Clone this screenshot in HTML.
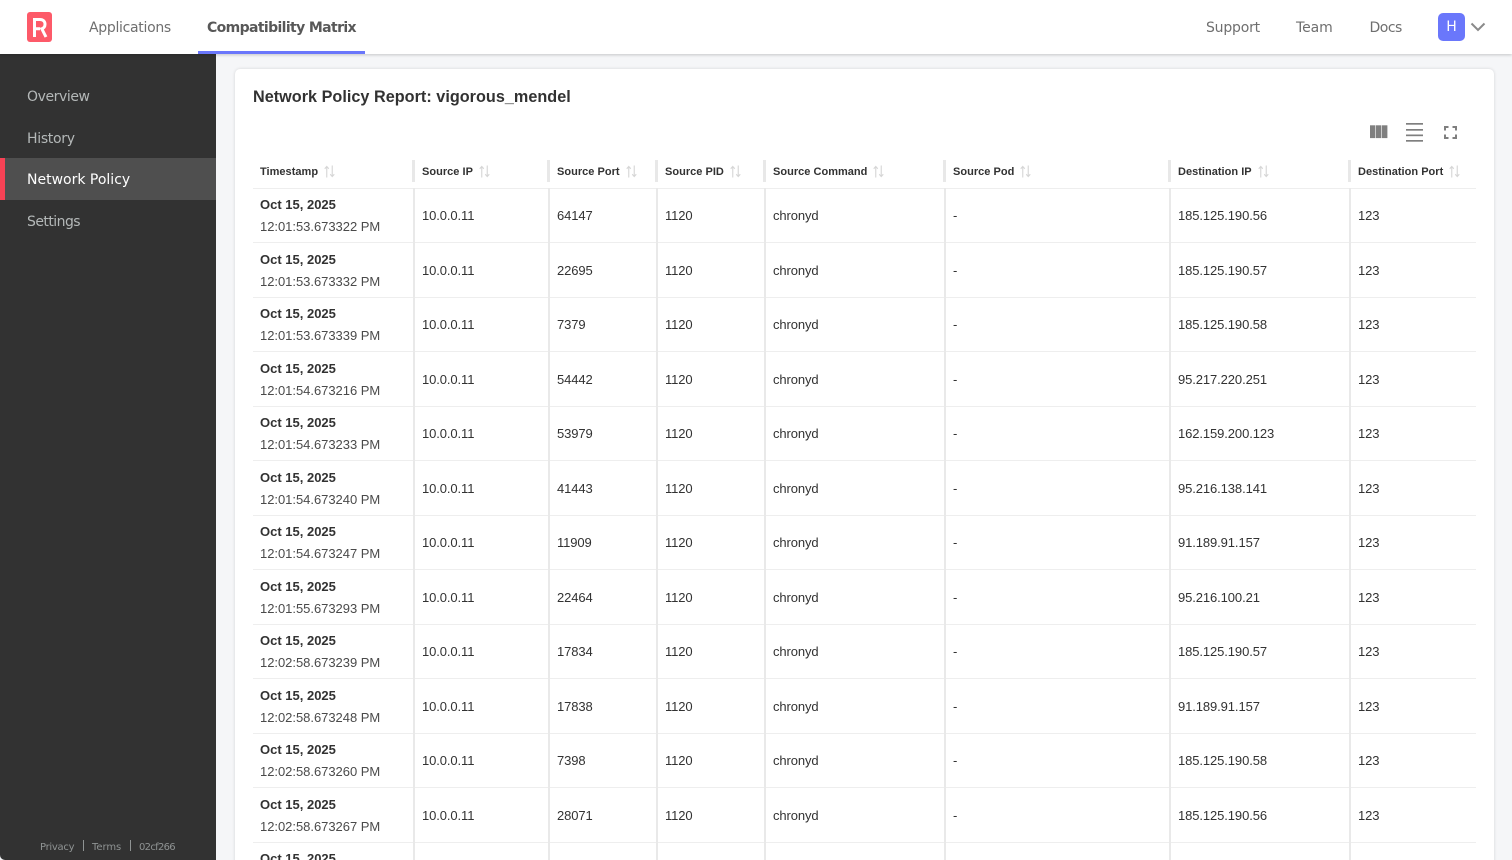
<!DOCTYPE html>
<html><head><meta charset="utf-8"><title>Network Policy</title>
<style>
*{box-sizing:border-box}
html,body{margin:0;padding:0;width:1512px;height:860px;overflow:hidden;background:#f5f6f8;font-family:"Liberation Sans",sans-serif;color:#323232}
#wrap{position:relative;width:1512px;height:860px;overflow:hidden;background:#f5f6f8}
.a{position:absolute;white-space:nowrap}
#top{position:absolute;left:0;top:0;width:1512px;height:54px;background:#fff;box-shadow:0 1px 3px rgba(0,0,0,.2);z-index:5}
.nav{position:absolute;top:18px;font-family:"DejaVu Sans",sans-serif;font-size:14px;line-height:20px;color:#6f6f6f;white-space:nowrap}
#side{position:absolute;left:0;top:54px;width:216px;height:806px;background:#323232;border-bottom-left-radius:5px}
.si{position:absolute;left:27px;font-family:"DejaVu Sans",sans-serif;font-size:14px;line-height:20px;color:#b4b8b8;white-space:nowrap}
.ft{position:absolute;top:787px;font-family:"DejaVu Sans",sans-serif;font-size:10px;line-height:14px;color:#8f9393;white-space:nowrap}
#card{position:absolute;left:235px;top:69px;width:1259px;height:830px;background:#fff;border-radius:5px;box-shadow:0 0 3px rgba(0,0,0,.14)}
table{position:absolute;left:253px;top:154.7px;border-collapse:collapse;table-layout:fixed;width:1223px;font-size:13px}
th{height:33.5px;padding:1px 0 0 7px;text-align:left;font-size:11px;letter-spacing:.02px;font-weight:700;position:relative;border-bottom:1px solid #eee;color:#323232;white-space:nowrap}
th+th{padding-left:9px}
th+th:before{content:"";position:absolute;left:-1.5px;top:5px;width:3px;height:22px;background:#e8e8e8}
th svg{margin-left:6px;vertical-align:-3px}
td{height:54.5px;padding:2px 0 0 9px;border-bottom:1px solid #eee;color:#323232;white-space:nowrap;line-height:16px;letter-spacing:-.1px;position:relative}
td+td:before{content:"";position:absolute;left:0;top:-1px;bottom:-1px;width:2px;background:#e9e9e9}
td:first-child{padding-left:7px;line-height:22px;color:#4a4a4a;letter-spacing:-.03px}
td b{display:block;font-weight:700;font-size:13px;color:#323232;letter-spacing:0}
</style></head><body>
<div id="wrap">
<div id="top">
<svg class="a" style="left:27px;top:12px" width="26" height="30" viewBox="0 0 26 30"><rect width="25" height="30" rx="3" fill="#fd5a69"/><path d="M7.500 25V7.500h5.500c3 0 5 1.800 5 4.800 0 2.400-1.200 3.900-3.200 4.500L19 25M7.500 16.800h5.500" fill="none" stroke="#fff" stroke-width="3"/></svg>
<div class="nav" style="left:89px;letter-spacing:-.3px">Applications</div>
<div class="nav" style="left:207px;font-weight:700;letter-spacing:-.62px;color:#585858">Compatibility Matrix</div>
<div class="a" style="left:198px;top:51px;width:167px;height:3px;background:#6a77fb"></div>
<div class="nav" style="left:1206px;letter-spacing:-.2px">Support</div>
<div class="nav" style="left:1296px;letter-spacing:-.1px">Team</div>
<div class="nav" style="left:1369.500px;letter-spacing:-.5px">Docs</div>
<div class="a" style="left:1438px;top:13px;width:27px;height:28px;border-radius:5px;background:#6a77fb;color:#fff;text-align:center;font:14px/28px 'DejaVu Sans',sans-serif">H</div>
<svg class="a" style="left:1470px;top:22px" width="16" height="10" viewBox="0 0 16 10"><path d="M1.500 1.500 8 8l6.500-6.500" fill="none" stroke="#8a8a8a" stroke-width="2"/></svg>
</div>
<div id="side">
<div class="si" style="top:33px;letter-spacing:-.42px">Overview</div>
<div class="si" style="top:75px;letter-spacing:-.3px">History</div>
<div class="a" style="left:0;top:104px;width:216px;height:42px;background:#4f4f4f"></div>
<div class="a" style="left:0;top:104px;width:5px;height:42px;background:#f74255"></div>
<div class="si" style="top:116px;color:#fff;letter-spacing:0">Network Policy</div>
<div class="si" style="top:158px;letter-spacing:-.55px">Settings</div>
<div class="ft" style="left:40px;letter-spacing:-.28px">Privacy</div>
<div class="a" style="left:83px;top:786px;width:1px;height:11px;background:#8f9393"></div>
<div class="ft" style="left:92px;letter-spacing:-.05px">Terms</div>
<div class="a" style="left:130px;top:786px;width:1px;height:11px;background:#8f9393"></div>
<div class="ft" style="left:139px;letter-spacing:-.7px">02cf266</div>
</div>
<div id="card"></div>
<div class="a" style="left:253px;top:87px;font-size:16.200px;line-height:21px;font-weight:700;color:#323232;letter-spacing:.03px">Network Policy Report: vigorous_mendel</div>
<svg class="a" style="left:1370px;top:122px" width="96" height="20" viewBox="0 0 96 20"><g fill="#7f7f7f"><rect x="0" y="3.300" width="5.400" height="12.800"/><rect x="6" y="3.300" width="5.400" height="12.800"/><rect x="12" y="3.300" width="5.400" height="12.800"/><rect x="36" y="1" width="17" height="1.700"/><rect x="36" y="7" width="17" height="1.700"/><rect x="36" y="12.500" width="17" height="1.700"/><rect x="36" y="18" width="17" height="1.700"/></g><path d="M75 8.500V5h3.500M82.500 5H86v3.500M86 12.500V16h-3.500M78.500 16H75v-3.500" fill="none" stroke="#7f7f7f" stroke-width="2"/></svg>
<table><colgroup><col style="width:160px"><col style="width:135px"><col style="width:108px"><col style="width:108px"><col style="width:180px"><col style="width:225px"><col style="width:180px"><col style="width:127px"></colgroup>
<tr><th>Timestamp<svg width="11" height="13" viewBox="0 0 12 13"><path d="M3 13V1M.8 3.500 3 1l2.200 2.500M9 0v12M6.800 9.500 9 12l2.200-2.500" fill="none" stroke="#d6d6d6" stroke-width="1.200"/></svg></th><th>Source IP<svg width="11" height="13" viewBox="0 0 12 13"><path d="M3 13V1M.8 3.500 3 1l2.200 2.500M9 0v12M6.800 9.500 9 12l2.200-2.500" fill="none" stroke="#d6d6d6" stroke-width="1.200"/></svg></th><th>Source Port<svg width="11" height="13" viewBox="0 0 12 13"><path d="M3 13V1M.8 3.500 3 1l2.200 2.500M9 0v12M6.800 9.500 9 12l2.200-2.500" fill="none" stroke="#d6d6d6" stroke-width="1.200"/></svg></th><th>Source PID<svg width="11" height="13" viewBox="0 0 12 13"><path d="M3 13V1M.8 3.500 3 1l2.200 2.500M9 0v12M6.800 9.500 9 12l2.200-2.500" fill="none" stroke="#d6d6d6" stroke-width="1.200"/></svg></th><th>Source Command<svg width="11" height="13" viewBox="0 0 12 13"><path d="M3 13V1M.8 3.500 3 1l2.200 2.500M9 0v12M6.800 9.500 9 12l2.200-2.500" fill="none" stroke="#d6d6d6" stroke-width="1.200"/></svg></th><th>Source Pod<svg width="11" height="13" viewBox="0 0 12 13"><path d="M3 13V1M.8 3.500 3 1l2.200 2.500M9 0v12M6.800 9.500 9 12l2.200-2.500" fill="none" stroke="#d6d6d6" stroke-width="1.200"/></svg></th><th>Destination IP<svg width="11" height="13" viewBox="0 0 12 13"><path d="M3 13V1M.8 3.500 3 1l2.200 2.500M9 0v12M6.800 9.500 9 12l2.200-2.500" fill="none" stroke="#d6d6d6" stroke-width="1.200"/></svg></th><th>Destination Port<svg width="11" height="13" viewBox="0 0 12 13"><path d="M3 13V1M.8 3.500 3 1l2.200 2.500M9 0v12M6.800 9.500 9 12l2.200-2.500" fill="none" stroke="#d6d6d6" stroke-width="1.200"/></svg></th></tr>
<tr><td><b>Oct 15, 2025</b>12:01:53.673322 PM</td><td>10.0.0.11</td><td>64147</td><td>1120</td><td>chronyd</td><td>-</td><td>185.125.190.56</td><td>123</td></tr>
<tr><td><b>Oct 15, 2025</b>12:01:53.673332 PM</td><td>10.0.0.11</td><td>22695</td><td>1120</td><td>chronyd</td><td>-</td><td>185.125.190.57</td><td>123</td></tr>
<tr><td><b>Oct 15, 2025</b>12:01:53.673339 PM</td><td>10.0.0.11</td><td>7379</td><td>1120</td><td>chronyd</td><td>-</td><td>185.125.190.58</td><td>123</td></tr>
<tr><td><b>Oct 15, 2025</b>12:01:54.673216 PM</td><td>10.0.0.11</td><td>54442</td><td>1120</td><td>chronyd</td><td>-</td><td>95.217.220.251</td><td>123</td></tr>
<tr><td><b>Oct 15, 2025</b>12:01:54.673233 PM</td><td>10.0.0.11</td><td>53979</td><td>1120</td><td>chronyd</td><td>-</td><td>162.159.200.123</td><td>123</td></tr>
<tr><td><b>Oct 15, 2025</b>12:01:54.673240 PM</td><td>10.0.0.11</td><td>41443</td><td>1120</td><td>chronyd</td><td>-</td><td>95.216.138.141</td><td>123</td></tr>
<tr><td><b>Oct 15, 2025</b>12:01:54.673247 PM</td><td>10.0.0.11</td><td>11909</td><td>1120</td><td>chronyd</td><td>-</td><td>91.189.91.157</td><td>123</td></tr>
<tr><td><b>Oct 15, 2025</b>12:01:55.673293 PM</td><td>10.0.0.11</td><td>22464</td><td>1120</td><td>chronyd</td><td>-</td><td>95.216.100.21</td><td>123</td></tr>
<tr><td><b>Oct 15, 2025</b>12:02:58.673239 PM</td><td>10.0.0.11</td><td>17834</td><td>1120</td><td>chronyd</td><td>-</td><td>185.125.190.57</td><td>123</td></tr>
<tr><td><b>Oct 15, 2025</b>12:02:58.673248 PM</td><td>10.0.0.11</td><td>17838</td><td>1120</td><td>chronyd</td><td>-</td><td>91.189.91.157</td><td>123</td></tr>
<tr><td><b>Oct 15, 2025</b>12:02:58.673260 PM</td><td>10.0.0.11</td><td>7398</td><td>1120</td><td>chronyd</td><td>-</td><td>185.125.190.58</td><td>123</td></tr>
<tr><td><b>Oct 15, 2025</b>12:02:58.673267 PM</td><td>10.0.0.11</td><td>28071</td><td>1120</td><td>chronyd</td><td>-</td><td>185.125.190.56</td><td>123</td></tr>
<tr><td><b>Oct 15, 2025</b>12:02:58.673270 PM</td><td>10.0.0.11</td><td>41000</td><td>1120</td><td>chronyd</td><td>-</td><td>185.125.190.57</td><td>123</td></tr>
</table>
</div>
</body></html>
